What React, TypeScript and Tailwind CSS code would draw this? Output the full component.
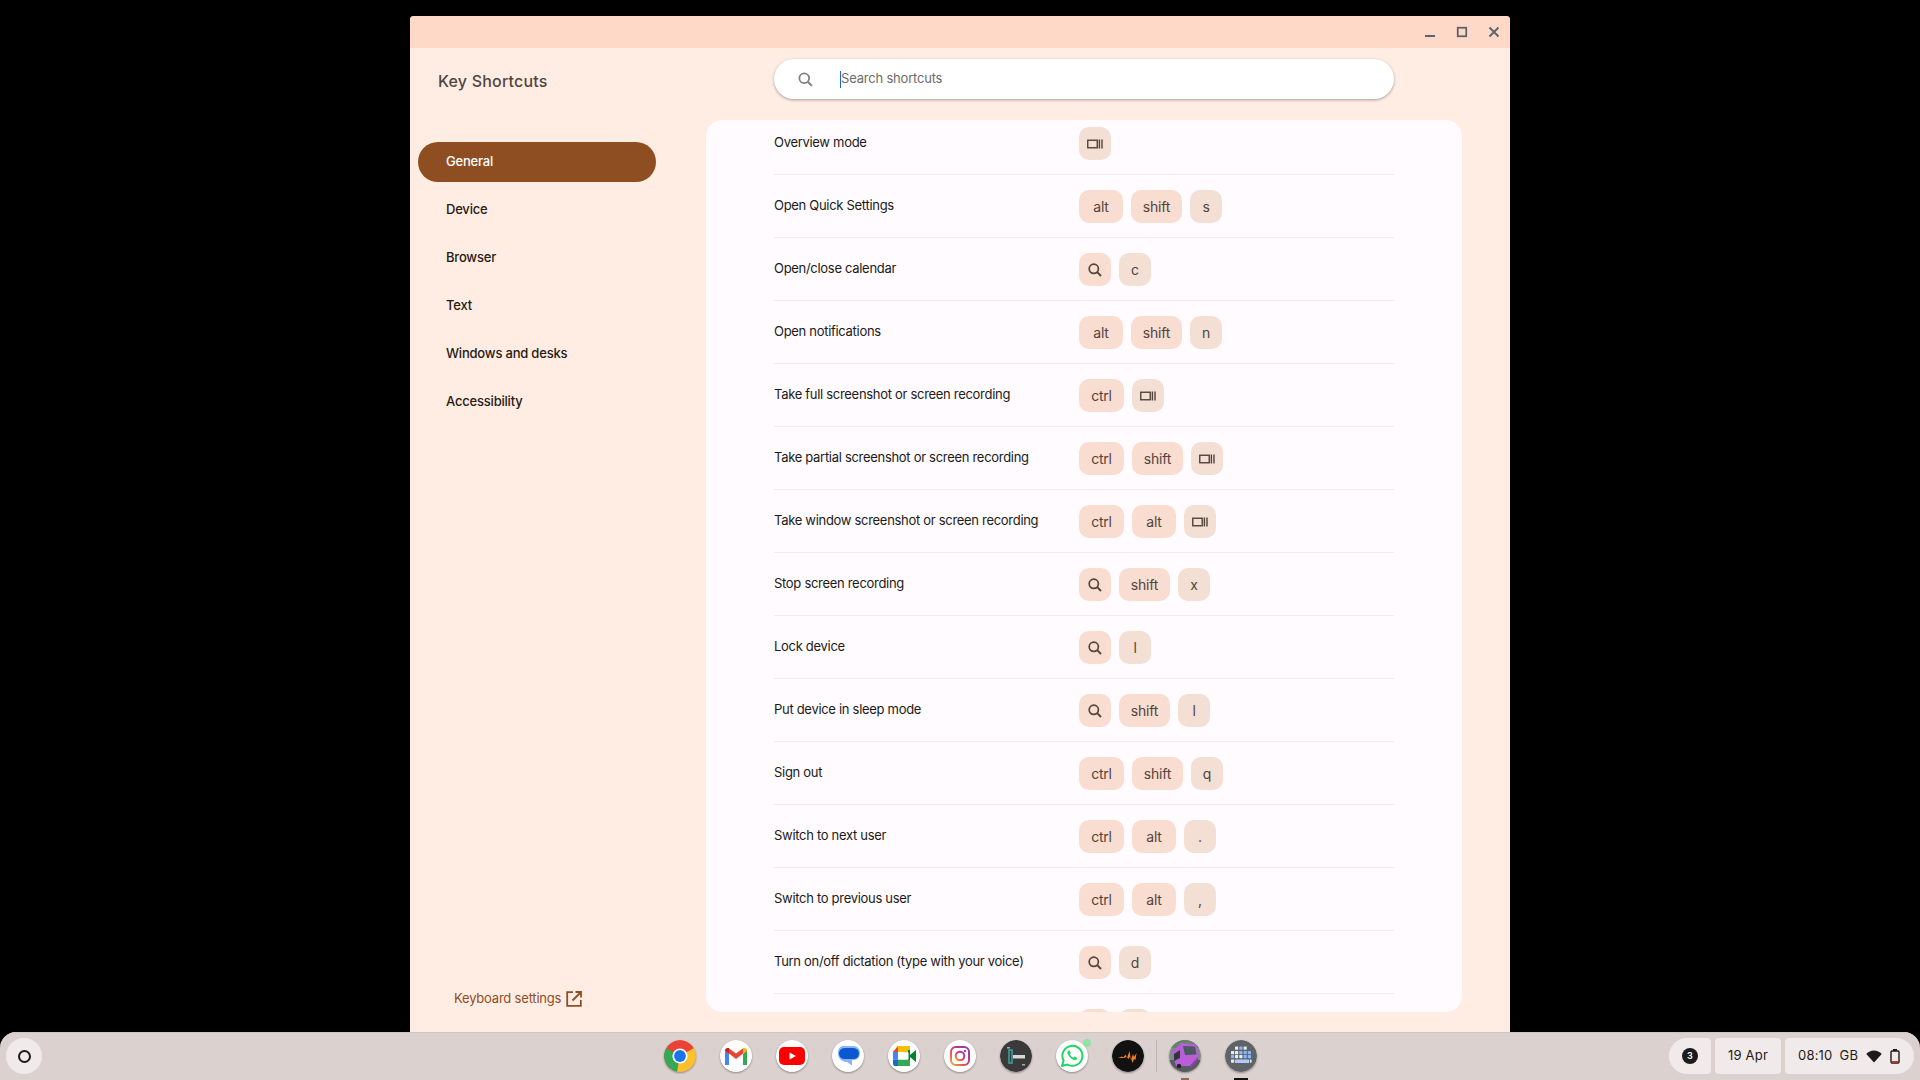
import React from "react";

const FONT = "font-['Inter','Roboto',sans-serif]";

type Row = { label: string; keys: string[] };
const rows: Row[] = [
  { label: "Overview mode", keys: ["#overview"] },
  { label: "Open Quick Settings", keys: ["alt", "shift", "s"] },
  { label: "Open/close calendar", keys: ["#search", "c"] },
  { label: "Open notifications", keys: ["alt", "shift", "n"] },
  { label: "Take full screenshot or screen recording", keys: ["ctrl", "#overview"] },
  { label: "Take partial screenshot or screen recording", keys: ["ctrl", "shift", "#overview"] },
  { label: "Take window screenshot or screen recording", keys: ["ctrl", "alt", "#overview"] },
  { label: "Stop screen recording", keys: ["#search", "shift", "x"] },
  { label: "Lock device", keys: ["#search", "l"] },
  { label: "Put device in sleep mode", keys: ["#search", "shift", "l"] },
  { label: "Sign out", keys: ["ctrl", "shift", "q"] },
  { label: "Switch to next user", keys: ["ctrl", "alt", "."] },
  { label: "Switch to previous user", keys: ["ctrl", "alt", ","] },
  { label: "Turn on/off dictation (type with your voice)", keys: ["#search", "d"] },
  { label: "", keys: ["#search", "#blank"] },
];

const nav = ["General", "Device", "Browser", "Text", "Windows and desks", "Accessibility"];

function SearchGlyph({ size = 16, color = "#52443c" }: { size?: number; color?: string }) {
  return (
    <svg width={size} height={size} viewBox="0 0 16 16" fill="none">
      <circle cx="6.8" cy="6.8" r="4.6" stroke={color} strokeWidth="1.7" />
      <path d="M10.2 10.2L14 14" stroke={color} strokeWidth="1.9" />
    </svg>
  );
}

function OverviewGlyph() {
  return (
    <svg width="16" height="10" viewBox="0 0 16 10" fill="none">
      <rect x="0.75" y="1.25" width="9.5" height="7.5" stroke="#52443c" strokeWidth="1.4" />
      <path d="M12.4 0.6V9.4M15 0.6V9.4" stroke="#52443c" strokeWidth="1.4" />
    </svg>
  );
}

function Key({ k }: { k: string }) {
  if (k === "#search")
    return (
      <span className="flex h-[33px] w-[32px] items-center justify-center rounded-[10px] bg-[#f9ddd0]">
        <SearchGlyph />
      </span>
    );
  if (k === "#overview")
    return (
      <span className="flex h-[33px] w-[32px] items-center justify-center rounded-[10px] bg-[#f3dfd3]">
        <OverviewGlyph />
      </span>
    );
  if (k === "#blank") return <span className="h-[33px] w-[32px] rounded-[10px] bg-[#f3dfd3]" />;
  const wordWidth = k === "alt" ? "w-[44px]" : k === "ctrl" ? "w-[45px]" : "w-[51px]";
  return (
    <span
      className={
        k.length === 1
          ? "flex h-[33px] w-[32px] items-center justify-center rounded-[10px] bg-[#f3dfd3] pb-px text-[14px] tracking-[-0.2px] text-[#52443c]"
          : `flex h-[33px] ${wordWidth} items-center justify-center rounded-[10px] bg-[#f9ddd0] pb-px text-[14px] tracking-[-0.2px] text-[#52443c]`
      }
    >
      {k}
    </span>
  );
}

function TitleBar() {
  return (
    <div className="flex h-8 shrink-0 items-center justify-end bg-[#ffd9c8]">
      <div className="flex h-8 w-8 items-center justify-center">
        <svg width="12" height="12" viewBox="0 0 12 12"><rect x="1" y="9" width="10" height="2" fill="#5f6368" /></svg>
      </div>
      <div className="flex h-8 w-8 items-center justify-center">
        <svg width="12" height="12" viewBox="0 0 12 12"><rect x="1.75" y="1.75" width="8.5" height="8.5" fill="none" stroke="#5f6368" strokeWidth="1.8" /></svg>
      </div>
      <div className="flex h-8 w-8 items-center justify-center">
        <svg width="12" height="12" viewBox="0 0 12 12"><path d="M1.5 1.5L10.5 10.5M10.5 1.5L1.5 10.5" stroke="#5f6368" strokeWidth="1.9" /></svg>
      </div>
    </div>
  );
}

function Sidebar() {
  return (
    <aside className="flex w-[296px] shrink-0 flex-col pb-[23px]">
      <h1 className="ml-[28px] mt-[21px] h-6 text-[16px] font-medium leading-6 tracking-[0.2px] text-[#52443c]">Key Shortcuts</h1>
      <nav className="ml-2 mt-[49px] flex w-[238px] flex-col gap-2">
        {nav.map((n, i) => (
          <div
            key={n}
            className={
              i === 0
                ? "flex h-10 items-center rounded-full bg-[#8f4e21] pl-7 text-[13px] font-medium tracking-[-0.2px] text-white"
                : "flex h-10 items-center rounded-full pl-7 text-[13px] font-medium tracking-[-0.2px] text-[#271a12]"
            }
          >
            {n}
          </div>
        ))}
      </nav>
      <div className="ml-[44px] mt-auto flex h-5 items-center gap-1 text-[13px] tracking-[-0.2px] text-[#8f4e21]">
        <span>Keyboard settings</span>
        <svg width="18" height="18" viewBox="0 0 18 18" fill="none" stroke="#8f4e21" strokeWidth="1.8">
          <path d="M8 2.2H2.2V15.8H15.8V10" />
          <path d="M7.5 10.500L15.500 2.500M10.500 2H16V7.500" />
        </svg>
      </div>
    </aside>
  );
}

function Main() {
  return (
    <main className="flex min-w-0 flex-1 flex-col pr-[48px] pb-5">
      <div className="mx-[68px] mt-[11px] flex h-10 shrink-0 items-center rounded-full bg-white pl-[23px] shadow-[0_1px_3px_rgba(0,0,0,0.35)]">
        <SearchGlyph size={17} color="#80807f" />
        <span className="ml-[26px] h-[17px] w-px bg-[#1a62d6]" />
        <span className="text-[13px] tracking-[-0.2px] text-[#6f6a67]">Search shortcuts</span>
      </div>
      <div className="mt-[21px] min-h-0 flex-1 overflow-hidden rounded-2xl bg-[#fffbff]">
        <ul className="mx-[68px] -mt-2">
          {rows.map((r, idx) => (
            <li key={idx} className="flex items-center border-b border-[#f1ebe9] pt-[15px] pb-[14px] text-[13px] tracking-[-0.3px] text-[#201a17]">
              <span className="w-[305px] shrink-0 pb-px">{r.label}</span>
              <span className="flex gap-2">
                {r.keys.map((k, i) => (
                  <Key key={i} k={k} />
                ))}
              </span>
            </li>
          ))}
        </ul>
      </div>
    </main>
  );
}

function AppSlot({ children, dot }: { children: React.ReactNode; dot?: string }) {
  return (
    <div className="relative flex h-12 w-14 items-center justify-center">
      <div className="h-8 w-8 overflow-hidden rounded-full shadow-[0_1px_2px_rgba(0,0,0,0.35)]">{children}</div>
      {dot && <span className={dot} />}
    </div>
  );
}

function Chrome() {
  return (
    <svg viewBox="0 0 32 32" className="h-8 w-8">
      <circle cx="16" cy="16" r="16" fill="#ea4335" />
      <path d="M16 16L2.100 8A16 16 0 0 0 13 31.700Z" fill="#34a853" />
      <path d="M16 16L30 8A16 16 0 0 1 13 31.700L16 16Z" fill="#fbc02d" />
      <circle cx="16" cy="16" r="7.600" fill="#fff" />
      <circle cx="16" cy="16" r="5.900" fill="#1a73e8" />
    </svg>
  );
}
function Gmail() {
  return (
    <svg viewBox="0 0 32 32" className="h-8 w-8">
      <circle cx="16" cy="16" r="16" fill="#fff" />
      <path d="M5 10.500V25h4V14z" fill="#4285f4" />
      <path d="M23 14v11h4V10.500z" fill="#34a853" />
      <path d="M5 10.500 16 19l11-8.500-3.500-2.500L16 13.500 8.500 8z" fill="#ea4335" />
      <path d="M23 8h1.500C26 8 27 9 27 10.500L23 14z" fill="#fbbc04" />
      <path d="M5 10.500C5 9 6 8 7.500 8H9v6z" fill="#c5221f" />
    </svg>
  );
}
function YouTube() {
  return (
    <svg viewBox="0 0 32 32" className="h-8 w-8">
      <circle cx="16" cy="16" r="16" fill="#fff" />
      <rect x="3" y="7" width="26" height="18" rx="5" fill="#ff0000" />
      <path d="M13.500 12.500 20 16l-6.500 3.500z" fill="#fff" />
    </svg>
  );
}
function Messages() {
  return (
    <svg viewBox="0 0 32 32" className="h-8 w-8">
      <circle cx="16" cy="16" r="16" fill="#fff" />
      <path d="M11 6h11a6.500 6.500 0 0 1 6 7c0 4-2.500 7-6 7h-2v5.500L15 22c-1 0-4-.2-6-2-2-1.800-3-4-3-7 0-4 2-7 5-7z" fill="#8ab4f8" />
      <rect x="7" y="8" width="20" height="11" rx="5.500" fill="#0b57d0" />
    </svg>
  );
}
function Meet() {
  return (
    <svg viewBox="0 0 32 32" className="h-8 w-8">
      <circle cx="16" cy="16" r="16" fill="#fff" />
      <path d="M10 6h12v6.500h-7V12H5z" fill="#fbbc04" />
      <path d="M5 12h5v7.500H5z" fill="#4285f4" />
      <path d="M5 19.500h5V26H7a2 2 0 0 1-2-2z" fill="#1967d2" />
      <path d="M10 19.500h12V26H10z" fill="#34a853" />
      <path d="M5 12l5-6v6z" fill="#ea4335" />
      <path d="M20 10h2v5l6-5v12l-6-5v3h-2z" fill="#00832d" />
      <rect x="10" y="12.500" width="10.500" height="7" fill="#fff" />
    </svg>
  );
}
function Instagram() {
  return (
    <svg viewBox="0 0 32 32" className="h-8 w-8">
      <defs>
        <linearGradient id="ig" x1="0" y1="1" x2="1" y2="0">
          <stop offset="0" stopColor="#f9a825" />
          <stop offset="0.5" stopColor="#e1306c" />
          <stop offset="1" stopColor="#7b3fc4" />
        </linearGradient>
      </defs>
      <circle cx="16" cy="16" r="16" fill="#fff" />
      <rect x="7" y="7" width="18" height="18" rx="5" fill="none" stroke="url(#ig)" strokeWidth="2" />
      <circle cx="16" cy="16" r="4.300" fill="none" stroke="url(#ig)" strokeWidth="2" />
      <circle cx="21" cy="11" r="1.200" fill="#c13584" />
    </svg>
  );
}
function Quotes() {
  return (
    <svg viewBox="0 0 32 32" className="h-8 w-8">
      <circle cx="16" cy="16" r="16" fill="#3a3a3a" />
      <path d="M9 10h3v13H9z" fill="none" stroke="#3aa6a6" strokeWidth="1.500" />
      <rect x="13" y="15" width="12" height="3.500" fill="#d8d8d8" />
      <rect x="7" y="7" width="3" height="1.500" fill="#aaa" />
      <rect x="22" y="24" width="3" height="1.500" fill="#aaa" />
    </svg>
  );
}
function WhatsApp() {
  return (
    <svg viewBox="0 0 32 32" className="h-8 w-8">
      <circle cx="16" cy="16" r="16" fill="#fff" />
      <path d="M6 26l1.600-5.500A10 10 0 1 1 11.500 24.500z" fill="#fff" stroke="#25d366" strokeWidth="2" strokeLinejoin="round" />
      <path d="M12.500 10.500c-1.500 1-1.500 3 .5 5.800 2 2.700 4.800 4.300 6.500 3.700 1.500-.5 1.800-1.800 1.500-2.300l-2.500-1.200-1 1.200c-1.200-.4-3-2-3.700-3.500l.9-1.100-1-2.600z" fill="#25d366" />
    </svg>
  );
}
function Audiomack() {
  return (
    <svg viewBox="0 0 32 32" className="h-8 w-8">
      <circle cx="16" cy="16" r="16" fill="#111" />
      <path d="M6 18l4-1.500 1.500 1 2-3 1.500 3.500 2.500-7 1.500 9 2-6 1 3 2.500-4-1 7-1.500-1-1.500 4-2-7-2 3-2-2.500-2 1.500z" fill="#f58220" />
    </svg>
  );
}
function Bus() {
  return (
    <svg viewBox="0 0 32 32" className="h-8 w-8">
      <circle cx="16" cy="16" r="16" fill="#7f8a88" />
      <path d="M0 20h32v12H0z" fill="#565b60" />
      <path d="M0 0h32v8H0z" fill="#66806a" />
      <path d="M3 12 12 3l15 1 3 12-9 10H7z" fill="#b85fd6" />
      <path d="M14 6l12 .5 1.500 8L16 15z" fill="#4a5a60" />
      <path d="M5 14l6-4v8l-6 3z" fill="#2f3540" />
      <path d="M21 26l8-9v3l-7 8z" fill="#8d3fae" />
      <circle cx="10" cy="26" r="2.200" fill="#222" />
    </svg>
  );
}
function Keyboard() {
  const cells: [number, number, string][] = [
    [10, 6.500, "#e8eaed"], [14.300, 6.500, "#8ab4f8"], [18.600, 6.500, "#e8eaed"],
    [6, 11, "#e8eaed"], [10, 11, "#e8eaed"], [14.300, 11, "#8ab4f8"], [18.600, 11, "#8ab4f8"], [22.800, 11, "#8ab4f8"],
    [6, 15, "#8ab4f8"], [10, 15, "#e8eaed"], [14.300, 15, "#e8eaed"], [18.600, 15, "#8ab4f8"], [22.800, 15, "#8ab4f8"],
  ];
  return (
    <svg viewBox="0 0 32 32" className="h-8 w-8">
      <circle cx="16" cy="16" r="16" fill="#5f6368" />
      {cells.map(([x, y, f], i) => (
        <rect key={i} x={x} y={y} width="3.200" height="3.200" rx="0.600" fill={f} />
      ))}
      <rect x="6" y="19.500" width="3.200" height="3.200" rx="0.600" fill="#e8eaed" />
      <rect x="10" y="19.500" width="14" height="3.500" rx="0.600" fill="#aecbfa" />
      <rect x="24.800" y="19.500" width="1.800" height="3.200" rx="0.600" fill="#e8eaed" />
    </svg>
  );
}

function Shelf() {
  return (
    <footer className="grid h-12 shrink-0 grid-cols-[1fr_auto_1fr] items-center rounded-t-2xl bg-[#dbd1cf] pl-[6px] pr-[6px] shadow-[inset_0_1px_0_#cfc5c2]">
      <div className="flex items-center">
        <div className="flex h-9 w-9 items-center justify-center rounded-full bg-[#f0eaea]">
          <span className="h-[13px] w-[13px] rounded-full border-2 border-[#1a1a1a]" />
        </div>
      </div>
      <div className="-mt-px flex items-center">
        <AppSlot><Chrome /></AppSlot>
        <AppSlot><Gmail /></AppSlot>
        <AppSlot><YouTube /></AppSlot>
        <AppSlot><Messages /></AppSlot>
        <AppSlot><Meet /></AppSlot>
        <AppSlot><Instagram /></AppSlot>
        <AppSlot><Quotes /></AppSlot>
        <AppSlot dot="absolute right-[9px] top-[7px] h-2 w-2 rounded-full bg-[#8fe3a3]"><WhatsApp /></AppSlot>
        <AppSlot><Audiomack /></AppSlot>
        <span className="h-8 w-px bg-[#bdb3b1]" />
        <AppSlot dot="absolute bottom-0 left-6 h-[2px] w-2 bg-[#8f6a58]"><Bus /></AppSlot>
        <AppSlot dot="absolute bottom-0 left-[21px] h-[2px] w-[14px] bg-[#111]"><Keyboard /></AppSlot>
      </div>
      <div className="flex items-center justify-end gap-1 text-[13px] tracking-[0.2px] text-[#1f1a18]">
        <div className="flex h-9 w-[42px] items-center justify-center rounded-l-[18px] rounded-r bg-[#f0eaea]">
          <span className="flex h-4 w-4 items-center justify-center rounded-full bg-[#1c1b1b] text-[9px] font-semibold text-white">3</span>
        </div>
        <div className="flex h-9 w-[66px] items-center justify-center rounded bg-[#f0eaea]">19 Apr</div>
        <div className="flex h-9 w-[129px] items-center rounded-l rounded-r-[18px] bg-[#f0eaea] pl-[13px]">
          <span>08:10</span>
          <span className="ml-[7px]">GB</span>
          <svg width="16" height="13" viewBox="0 0 16 13" className="ml-[8px]">
            <path d="M8 12.500 0.300 4C2.300 1.800 5 0.500 8 0.500s5.700 1.300 7.700 3.500z" fill="#1f1a18" />
          </svg>
          <svg width="10" height="15" viewBox="0 0 10 15" className="ml-[8px]">
            <rect x="3" y="0" width="4" height="2" fill="#1f1a18" />
            <rect x="1" y="2" width="8" height="12" rx="1" fill="none" stroke="#1f1a18" strokeWidth="1.400" />
            <rect x="2" y="12" width="6" height="1.500" fill="#d93025" />
          </svg>
        </div>
      </div>
    </footer>
  );
}

export default function App() {
  return (
    <div className={`flex h-screen w-full flex-col overflow-hidden bg-black ${FONT}`}>
      <div className="flex min-h-0 flex-1 justify-center pt-4">
        <section className="flex w-[1100px] flex-col overflow-hidden rounded-t bg-[#ffede4]">
          <TitleBar />
          <div className="flex min-h-0 flex-1">
            <Sidebar />
            <Main />
          </div>
        </section>
      </div>
      <Shelf />
    </div>
  );
}
